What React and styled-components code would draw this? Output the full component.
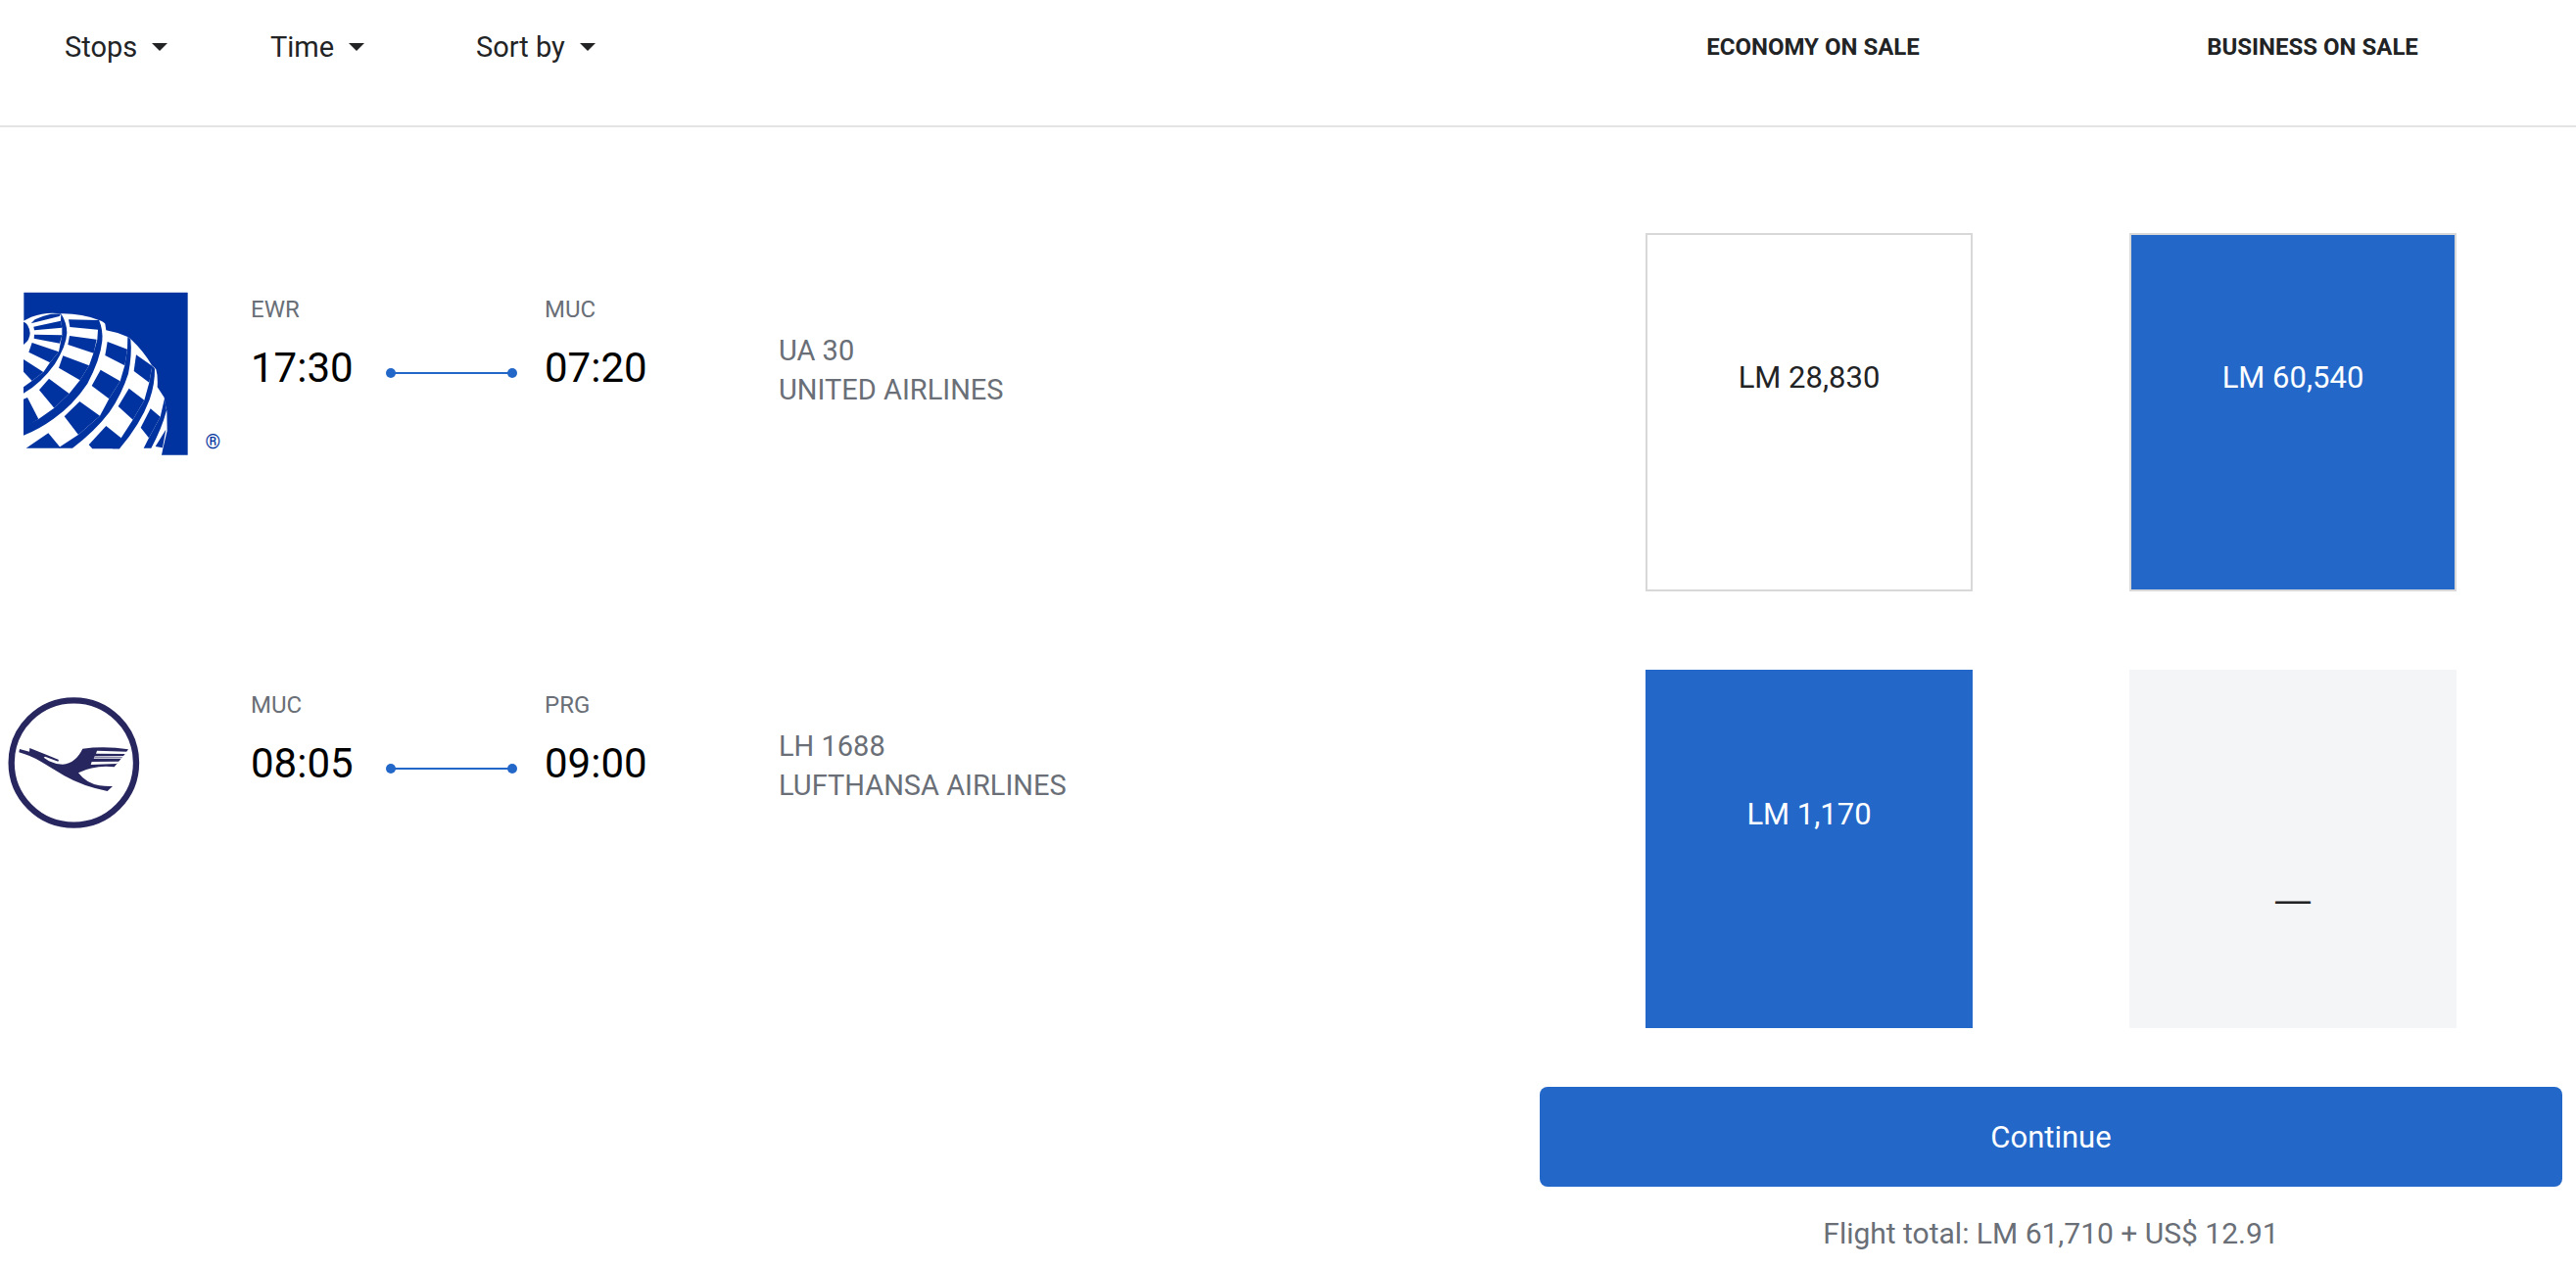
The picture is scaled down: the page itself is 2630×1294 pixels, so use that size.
import React, { useState } from 'react';
import styled, { createGlobalStyle } from 'styled-components';

const flights = [
  {
    id: 'UA30',
    from: 'EWR',
    to: 'MUC',
    departs: '17:30',
    arrives: '07:20',
    number: 'UA 30',
    airline: 'UNITED AIRLINES',
    economy: 'LM 28,830',
    business: 'LM 60,540',
    outlined: true,
  },
  {
    id: 'LH1688',
    from: 'MUC',
    to: 'PRG',
    departs: '08:05',
    arrives: '09:00',
    number: 'LH 1688',
    airline: 'LUFTHANSA AIRLINES',
    economy: 'LM 1,170',
    business: null,
    outlined: false,
  },
];

const filters = ['Stops', 'Time', 'Sort by'];

const UnitedLogo = () => (
  <Logo viewBox="0 54 684 504" role="img" aria-label="United Airlines">
    <path fill="#0033a0" d="M73 56H575V554H73Z" />
    {/* globe */}
    <path
      fill="#fff"
      d="M72 143L84 137L96 131Q130 119 160 119L187 121Q250 120 303 141Q318 146 322 152L325 172Q360 178 391 192L402 200Q440 236 463 276L478 292Q484 312 482 346L503 378L505 392L511 420L512 480L499 535L495 554V560H70V143Z"
    />
    <g fill="#0033a0">
      {/* pole */}
      <path d="M72 146Q88 150 92 180Q92 202 72 216Z" />
      <path d="M95 151L107 139Q128 128 156 122L187 121L182 129Z" />
      <path d="M103 161L186 143L190 164L105 172Z" />
      <path d="M105 185L190 187L183 212L104 197Z" />
      <path d="M98 210L180 238L153 271L88 239Z" />
      <path d="M72 261L133 300L98 327L72 299Z" />
      {/* meridians */}
      <path d="M187 121Q205 150 205 180Q203 220 168 275Q125 335 72 365V346L98 327L133 300L153 271L180 238L190 187L190 164L186 143Z" />
      <path d="M210 139L300 141L300 170L214 162Z" />
      <path d="M213 189L296 200L287 242L208 216Z" />
      <path d="M193 250L273 280L245 325L180 287Z" />
      <path d="M150 320L212 366L166 410L120 355Z" />
      <path d="M72 383L84 378L118 444L72 472Z" />
      <path d="M303 140Q316 170 313 205Q307 262 268 335Q225 400 164 443Q120 475 72 494V468L118 444L166 410L212 366L245 325L273 280L287 240L298 200L300 170L298 142Z" />
      <path d="M329 207L390 230L382 280L322 249Z" />
      <path d="M308 293L368 328L334 382L281 342Z" />
      <path d="M244 390L306 434L240 492L197 436Z" />
      <path d="M80 533L148 487L184 530V533Z" />
      <path d="M391 192L400 200Q405 245 393 305Q372 370 335 423Q290 482 222 533H180L185 528L240 492L306 434L334 382L368 328L382 280L390 230Z" />
      <path d="M417 247L466 281L457 332L410 297Z" />
      <path d="M395 350L442 386L407 446L362 405Z" />
      <path d="M325 465L371 502L366 535H283L272 523Z" />
      <path d="M462 274L474 290Q475 335 458 385Q430 460 366 535H345L371 502L407 446L442 386L457 332L466 281Z" />
      <path d="M461 412L491 437L456 502L431 470Z" />
      <path d="M504 384L510 418Q495 475 463 533H440L456 502L491 437L503 385Z" />
      <path d="M508 476L498 532L476 528Z" />
    </g>
    <text x="652" y="533" fontSize="60" textAnchor="middle" fill="#0033a0" fontFamily="Roboto, sans-serif">®</text>
  </Logo>
);

const LufthansaLogo = () => (
  <Logo viewBox="0 36 684 504" role="img" aria-label="Lufthansa">
    <circle cx="226" cy="267" r="191" fill="none" stroke="#28265f" strokeWidth="19" />
    <path
      fill="#28265f"
      d="M60 225L90 233L91 222L138 241L180 258L178 263L138 248L134 251L150 262Q170 272 192 272Q232 268 253 224Q322 215 393 226L383 240L350 280Q290 273 240 298Q264 330 305 337Q325 340 345 339L329 354Q255 340 197 307L130 266Q95 245 58 235Z"
    />
    <g fill="#fff">
      <path d="M297 230L390 233L384 240L294 239Z" />
      <path d="M290 247L379 246L371 254L287 254Z" />
      <path d="M281 264L366 263L357 270L278 273Z" />
    </g>
    <path d="M289 250H374" stroke="#28265f" strokeWidth="2" />
  </Logo>
);

const logos = { UA30: UnitedLogo, LH1688: LufthansaLogo };

const Flight = ({ flight }) => {
  const AirlineLogo = logos[flight.id];
  return (
    <FlightRow>
      <AirlineLogo />
      <Stop>
        <Airport>{flight.from}</Airport>
        <Clock>{flight.departs}</Clock>
      </Stop>
      <RouteLine viewBox="0 0 134 12" aria-hidden="true">
        <path d="M5 6H129" stroke="#2368c9" strokeWidth="2" />
        <circle cx="5" cy="6" r="5" fill="#2368c9" />
        <circle cx="129" cy="6" r="5" fill="#2368c9" />
      </RouteLine>
      <Stop>
        <Airport>{flight.to}</Airport>
        <Clock>{flight.arrives}</Clock>
      </Stop>
      <Carrier>
        <div>{flight.number}</div>
        <div>{flight.airline}</div>
      </Carrier>
    </FlightRow>
  );
};

const App = () => {
  const [selected, setSelected] = useState({ UA30: 'business', LH1688: 'economy' });
  const choose = (id, cabin) => setSelected({ ...selected, [id]: cabin });

  return (
    <>
      <GlobalStyle />
      <Header>
        <Filters>
          {filters.map(name => (
            <FilterButton key={name} type="button">
              {name}
              <Caret />
            </FilterButton>
          ))}
        </Filters>
        <Cabins>
          <Cabin>ECONOMY ON SALE</Cabin>
          <Cabin>BUSINESS ON SALE</Cabin>
        </Cabins>
      </Header>
      <Main>
        <FlightList>
          {flights.map(flight => <Flight key={flight.id} flight={flight} />)}
        </FlightList>
        <Booking>
          <Fares>
            {flights.map(flight => ['economy', 'business'].map(cabin => (
              <Fare
                key={flight.id + cabin}
                type="button"
                disabled={!flight[cabin]}
                aria-pressed={selected[flight.id] === cabin}
                $selected={selected[flight.id] === cabin}
                $outlined={flight.outlined}
                onClick={() => choose(flight.id, cabin)}
              >
                {flight[cabin] || <Dash>—</Dash>}
              </Fare>
            )))}
          </Fares>
          <ContinueButton type="button">Continue</ContinueButton>
          <Total>Flight total: LM 61,710 + US$ 12.91</Total>
        </Booking>
      </Main>
    </>
  );
};

const GlobalStyle = createGlobalStyle`
  * {
    box-sizing: border-box;
  }
  body {
    margin: 0;
    background: #fff;
    color: #222325;
    font-family: Roboto, "Liberation Sans", sans-serif;
  }
  button {
    font-family: inherit;
    cursor: pointer;
  }
`

const Header = styled.header`
  display: grid;
  grid-template-columns: 131fr 87fr;
  height: 130px;
  padding: 28px 14px 0 0;
  border-bottom: 2px solid #e4e4e4;
`

const Filters = styled.nav`
  display: grid;
  grid-template-columns: repeat(3, 210px);
  align-items: start;
  padding-left: 66px;
`

const FilterButton = styled.button`
  display: flex;
  align-items: center;
  gap: 15px;
  padding: 0;
  border: 0;
  background: none;
  color: #222325;
  font-size: 29px;
  line-height: 40px;
`

const Caret = styled.span`
  border: 8px solid transparent;
  border-top-color: #222325;
  border-bottom: 0;
`

const Cabins = styled.div`
  display: grid;
  grid-template-columns: 1fr 1fr;
  padding-left: 24px;
`

const Cabin = styled.div`
  text-align: center;
  font-size: 24px;
  font-weight: 700;
  line-height: 40px;
`

const Main = styled.main`
  display: grid;
  grid-template-columns: 131fr 87fr;
  padding-right: 14px;
`

const FlightList = styled.section`
  padding-top: 168px;
`

const FlightRow = styled.article`
  display: grid;
  grid-template-columns: 256px 138px 162px 239px 1fr;
  align-items: start;
  min-height: 404px;
`

const Logo = styled.svg`
  width: 228px;
  height: 168px;
`

const Stop = styled.div`
  display: grid;
  gap: 16px;
`

const Airport = styled.div`
  color: #6a6f77;
  font-size: 24px;
  line-height: 36px;
`

const Clock = styled.div`
  color: #000;
  font-size: 42px;
  line-height: 52px;
`

const RouteLine = styled.svg`
  width: 134px;
  height: 12px;
  margin-top: 77px;
`

const Carrier = styled.div`
  padding-top: 40px;
  color: #6a6f77;
  font-size: 29px;
  line-height: 40px;
`

const Booking = styled.section`
  padding-top: 108px;
`

const Fares = styled.div`
  display: grid;
  grid-template-columns: 1fr 1fr;
  gap: 80px 160px;
  padding: 0 108px;
`

const Fare = styled.button`
  display: flex;
  flex-direction: column;
  align-items: center;
  justify-content: flex-start;
  height: 366px;
  padding: ${props => (props.$outlined ? 126 : 128)}px 0 0;
  border: ${props => (props.$outlined ? '2px solid #d8d8d8' : '0')};
  border-radius: 0;
  background: ${props => (props.$selected ? '#2368c9' : '#fff')};
  color: ${props => (props.$selected ? '#fff' : '#222325')};
  font-size: 31px;
  line-height: 40px;

  &:disabled {
    justify-content: center;
    padding-top: 104px;
    background: #f3f5f7;
    color: #222325;
    cursor: default;
  }
`

const Dash = styled.span`
  font-family: "Liberation Sans", sans-serif;
  font-size: 36px;
`

const ContinueButton = styled.button`
  display: block;
  width: 100%;
  height: 102px;
  margin-top: 60px;
  border: 0;
  border-radius: 8px;
  background: #2368c9;
  color: #fff;
  font-size: 31px;
`

const Total = styled.p`
  margin: 28px 0 0;
  color: #6a6f77;
  text-align: center;
  font-size: 30px;
  line-height: 40px;
`

export default App;
